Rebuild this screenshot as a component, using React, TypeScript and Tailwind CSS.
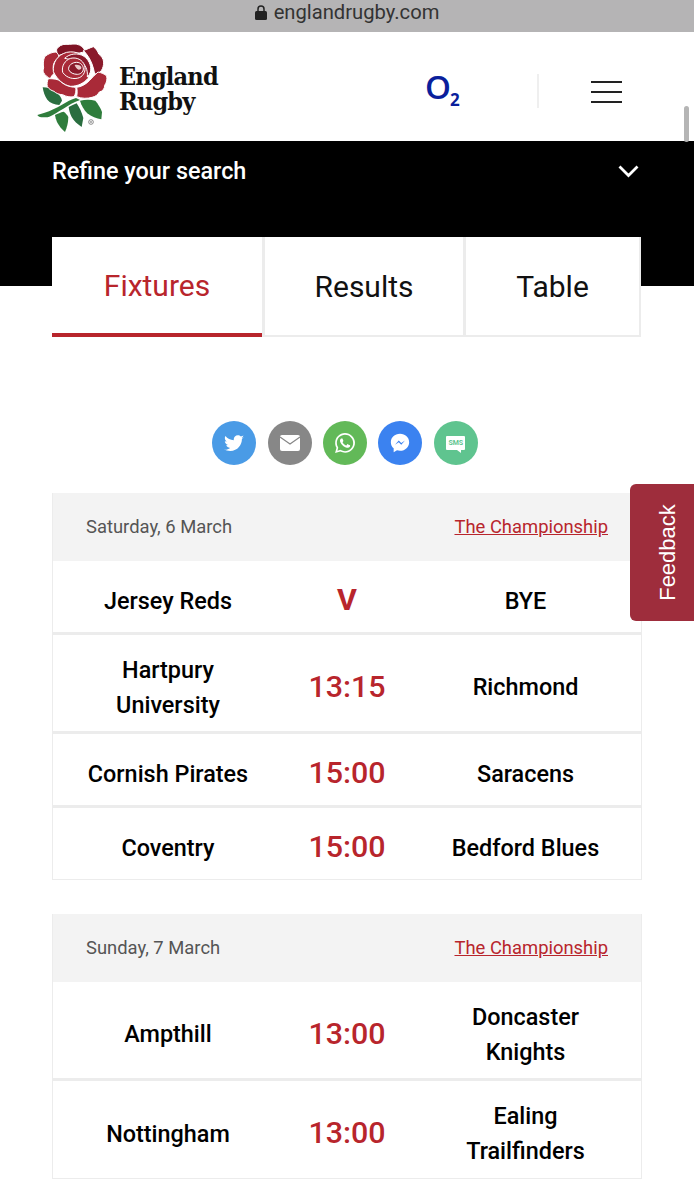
const font = "font-['Roboto',sans-serif]";

type Fixture = { home: string[]; time: string; away: string[]; h: string; big?: boolean };

const saturday: Fixture[] = [
  { home: ['Jersey Reds'], time: 'V', away: ['BYE'], h: 'h-[74px]', big: true },
  { home: ['Hartpury', 'University'], time: '13:15', away: ['Richmond'], h: 'h-[99px]' },
  { home: ['Cornish Pirates'], time: '15:00', away: ['Saracens'], h: 'h-[74px]' },
  { home: ['Coventry'], time: '15:00', away: ['Bedford Blues'], h: 'h-[72px]' },
];

const sunday: Fixture[] = [
  { home: ['Ampthill'], time: '13:00', away: ['Doncaster', 'Knights'], h: 'h-[99px]' },
  { home: ['Nottingham'], time: '13:00', away: ['Ealing', 'Trailfinders'], h: 'h-[98px]' },
];

// drawn in the coordinates of a 3x crop, hence the viewBox
function Rose() {
  const line = { stroke: '#fff', strokeWidth: 3, strokeLinejoin: 'round' as const };
  return (
    <svg width="85" height="100" viewBox="0 0 255 300" className="mt-[-3px] shrink-0">
      <path d="M22 240l22-7c18-6 34-14 52-24 14-8 28-16 42-20l12 6c-18 6-34 16-50 26-14 8-28 18-42 24-6 2-16 2-24 2-6 0-10-4-12-7z" fill="#2f7d3c" />
      <path d="M38 157c14 0 28 3 40 14 10 8 17 18 18 26l-8 13c-14-2-28-6-36-16-8-10-12-24-14-37z" fill="#2a6e40" />
      <path d="M150 197c16-4 32-4 46 0 8 10 16 22 20 34l-2 22c-14-2-30-8-42-18-10-10-18-24-22-38z" fill="#2f7d3c" />
      <path d="M116 216c8-4 16-8 24-11 8 12 16 28 20 44l-5 27c-12-8-24-18-30-30-5-10-8-20-9-30z" fill="#2a6e40" />
      <path d="M75 240c8-4 17-8 26-10 6 4 11 10 14 16 0 16-4 32-10 45-10-8-18-18-24-30-3-7-5-14-6-21z" fill="#2f7d3c" />
      <path d="M80 42c6-8 16-15 28-14 14 1 28-4 40 2 8 4 14 10 17 17-8 8-22 8-36 7-16 0-30 2-44 8-4-6-6-14-5-20z" fill="#7f1425" {...line} />
      <path d="M160 46c10-2 20-8 30-11 8 6 14 14 16 22 8 6 14 14 15 24 0 10-2 18-7 26-6 6-12 10-20 10-2-10-4-20-8-30-6-16-14-28-26-41z" fill="#8a1a2b" {...line} />
      <path d="M44 65c10-8 22-14 34-14 6 4 9 10 8 16-8 6-14 14-16 24-1 8 0 16 3 24-6 4-10 10-12 16-8-4-16-10-20-18-2-4-2-10 0-14-2-12-1-24 3-34z" fill="#a92a38" {...line} />
      <path d="M55 131c4 0 20 0 30 4 8 4 14 12 24 16 10 4 20 6 28 6 2 10 0 20-5 28-12 2-24 0-34-6-10 0-20-4-26-10-8-2-16-8-20-14-2-8 0-18 3-24z" fill="#a92a38" {...line} />
      <path d="M140 157c14-2 26-8 38-20 8-8 16-18 26-26 10 2 20 6 26 12 2 10 0 20-6 28 0 10-6 18-16 20-4 8-12 14-22 16-14 4-30 4-46-2 2-10 2-20 0-28z" fill="#a92a38" {...line} />
      <path d="M70 110c-2-28 12-50 40-58 30-6 54 8 68 34 4 16 2 30-4 44-12 14-30 24-52 24-22-4-40-20-52-44z" fill="#a92a38" {...line} />
      <path d="M104 70c14-14 40-18 58-6 14 10 22 26 20 44-2 8-6 14-10 18 2-22-6-40-24-48-16-6-32-4-44-8z" fill="#8a1a2b" {...line} />
      <path d="M98 112c-4-18 6-36 24-42 18-4 36 4 42 22 4 14-2 30-16 36-16 6-38 2-50-16z" fill="#a92a38" {...line} />
      <path d="M116 104c-2-12 10-22 24-22 12 0 20 10 20 20 0 8-8 16-18 16-10 0-22-4-26-14z" fill="#8a1a2b" {...line} />
      <path d="M134 90c8-2 16 0 20 6 1 6-2 8-8 8-6-2-10-8-12-14z" fill="#eac9c9" />
      <circle cx="183" cy="261" r="7" fill="none" stroke="#555" strokeWidth="2" />
      <circle cx="183" cy="261" r="2.500" fill="#555" />
    </svg>
  );
}

function ShareRow() {
  return (
    <div className="mt-[84px] flex justify-center gap-[11.400px] pr-[4px]">
      <span className="flex h-11 w-11 items-center justify-center rounded-full bg-[#4a9be6]">
        <svg width="20" height="17" viewBox="0 0 24 20" fill="#fff">
          <path d="M24 2.400c-.9.4-1.800.7-2.800.8 1-.6 1.800-1.600 2.200-2.700-1 .6-2 1-3.100 1.200C19.300.6 18 0 16.600 0c-2.700 0-4.900 2.200-4.900 4.900 0 .4 0 .8.100 1.100C7.700 5.800 4.100 3.800 1.700.9c-.4.700-.7 1.600-.7 2.500 0 1.700.9 3.200 2.200 4.100-.8 0-1.600-.2-2.200-.6v.1c0 2.400 1.700 4.400 3.900 4.800-.7.200-1.500.2-2.200.1.600 2 2.400 3.400 4.600 3.400-1.700 1.300-3.800 2.100-6.100 2.100-.4 0-.8 0-1.200-.1C2.200 18.200 4.800 19 7.500 19c9.100 0 14-7.500 14-14v-.6c1-.7 1.800-1.600 2.500-2z" />
        </svg>
      </span>
      <span className="flex h-11 w-11 items-center justify-center rounded-full bg-[#878787]">
        <svg width="20" height="16" viewBox="0 0 20 16">
          <rect width="20" height="16" rx="2" fill="#fff" />
          <path d="M0 2l10 7 10-7" fill="none" stroke="#878787" strokeWidth="1.200" />
        </svg>
      </span>
      <span className="flex h-11 w-11 items-center justify-center rounded-full bg-[#62b958]">
        <svg width="20" height="20" viewBox="0 0 24 24" fill="#fff">
          <path d="M17.500 14.400c-.3-.1-1.800-.9-2-1-.3-.1-.5-.1-.7.200-.2.300-.8 1-.9 1.200-.2.200-.3.200-.6.100-.3-.2-1.300-.5-2.400-1.500-.9-.8-1.500-1.800-1.700-2.100-.2-.3 0-.5.100-.6l.4-.5c.2-.2.200-.3.300-.5.100-.2.100-.4 0-.5-.1-.2-.7-1.600-.9-2.200-.2-.6-.5-.5-.7-.5h-.6c-.2 0-.5.100-.8.400-.3.300-1 1-1 2.500s1.100 2.900 1.200 3.100c.1.200 2.100 3.200 5.100 4.500.7.300 1.300.5 1.700.6.700.2 1.400.2 1.900.1.600-.1 1.800-.7 2-1.400.3-.7.300-1.300.2-1.400-.1-.1-.3-.2-.6-.4zM12 21.800c-1.800 0-3.500-.5-5-1.400l-.4-.2-3.700 1 1-3.600-.2-.4c-1-1.600-1.500-3.400-1.500-5.200C2.200 6.500 6.600 2.200 12 2.200c2.600 0 5.100 1 6.900 2.900 1.900 1.800 2.900 4.300 2.900 6.900 0 5.400-4.400 9.800-9.800 9.800zM20.400 3.500C18.200 1.300 15.200 0 12 0 5.500 0 .2 5.300.2 11.900c0 2.100.5 4.100 1.600 5.900L.1 24l6.300-1.700c1.700.9 3.700 1.400 5.700 1.400 6.500 0 11.900-5.300 11.900-11.900 0-3.100-1.300-6.100-3.600-8.300z" />
        </svg>
      </span>
      <span className="flex h-11 w-11 items-center justify-center rounded-full bg-[#3b82f0]">
        <svg width="20" height="20" viewBox="0 0 24 24">
          <path d="M12 1C5.600 1 1 5.400 1 11c0 3 1.300 5.600 3.400 7.400V23l4-2.200c1.100.3 2.300.5 3.600.5 6.400 0 11-4.700 11-10.300S18.400 1 12 1z" fill="#fff" />
          <path d="M6 14l4.500-5 3 3 4.500-3-4.500 5-3-3z" fill="#3b82f0" />
        </svg>
      </span>
      <span className="flex h-11 w-11 items-center justify-center rounded-full bg-[#5fc48f]">
        <span className="relative flex h-[14px] w-[19px] items-center justify-center rounded-[1px] bg-white text-[7px] font-bold text-[#5fc48f]">
          SMS
          <span className="absolute -bottom-[3px] right-[4px] h-0 w-0 border-l-[4px] border-t-[3px] border-l-transparent border-t-white" />
        </span>
      </span>
    </div>
  );
}

function Row({ f }: { f: Fixture }) {
  return (
    <div className={`flex items-center border-b-[3px] border-[#ececec] pt-[9px] text-center last:border-b ${f.h}`}>
      <div className="w-[230px] text-[23.400px] leading-[35px] font-medium text-black">
        {f.home.map((t) => <div key={t}>{t}</div>)}
      </div>
      <div className={`mb-[2px] w-[128px] text-[30.400px] text-[#b8252c] ${f.big ? 'font-bold' : 'font-medium'}`}>{f.time}</div>
      <div className="w-[229px] text-[23.400px] leading-[35px] font-medium text-black">
        {f.away.map((t) => <div key={t}>{t}</div>)}
      </div>
    </div>
  );
}

function DayCard({ date, fixtures }: { date: string; fixtures: Fixture[] }) {
  return (
    <div className="border-x border-[#ececec]">
      <div className="flex h-[68px] items-center justify-between bg-[#f3f3f3] pr-[33px] pl-[33px] text-[18.400px]">
        <span className="text-[#555]">{date}</span>
        <a className="text-[#b8252c] underline">The Championship</a>
      </div>
      {fixtures.map((f) => <Row key={f.home[0]} f={f} />)}
    </div>
  );
}

export default function App() {
  return (
    <div className={`relative h-[1200px] overflow-hidden bg-white ${font}`}>
      <div className="flex h-8 items-center justify-center gap-[7px] bg-[#b5b4b5] pb-[8px] text-[20.200px] text-[#333]">
        <svg width="12" height="15" viewBox="0 0 12 15" fill="#222">
          <rect y="6" width="12" height="9" rx="1.500" />
          <path d="M3 7V4a3 3 0 016 0v3" fill="none" stroke="#222" strokeWidth="1.500" />
        </svg>
        englandrugby.com
      </div>

      <header className="flex h-[109px] items-center bg-white">
        <div className="ml-[30px] flex w-[340px] items-center">
          <Rose />
          <div className="mt-[4px] ml-[4px] font-['DejaVu_Serif_Condensed','DejaVu_Serif',serif] text-[25px] leading-[29px] font-bold tracking-[-0.800px] text-[#111]">
            <div className="-mb-[4px]">England</div>
            <div>Rugby</div>
          </div>
        </div>
        <div className="ml-[55px] flex w-[34px] items-end font-['Open_Sans',sans-serif] font-semibold text-[#0a1f9c]">
          <span className="text-[33px] leading-none">O</span>
          <span className="mb-[-5px] ml-[-1px] text-[17px] leading-none font-bold">2</span>
        </div>
        <div className="mt-[8px] ml-[78px] h-[34px] w-[2px] bg-[#efefef]" />
        <div className="mt-[11px] ml-[52px] flex w-[31px] flex-col gap-[7.500px]">
          <span className="h-[2.500px] bg-[#222]" />
          <span className="h-[2.500px] bg-[#222]" />
          <span className="h-[2.500px] bg-[#222]" />
        </div>
      </header>

      <div className="absolute top-[106px] right-[5px] h-[36px] w-[5px] rounded-full bg-[#b5b5b5]" />

      <div className="h-[145px] bg-black px-[52px] pt-[15px]">
        <div className="flex items-center justify-between pr-[3px] text-[23.400px] leading-[30px] font-medium text-white">
          Refine your search
          <svg width="21" height="13" viewBox="0 0 21 13" fill="none" stroke="#fff" strokeWidth="2.800">
            <path d="M1.500 1.500l9 9 9-9" />
          </svg>
        </div>
      </div>

      <div className="mx-[52px] -mt-[49px] flex h-[100px] text-[30px]">
        <div className="flex w-[210px] items-center justify-center border-b-[4px] border-[#b8252c] bg-white text-[#b8252c]">Fixtures</div>
        <div className="flex w-[204px] items-center justify-center border-x-[3px] border-b-2 border-[#ececec] bg-white text-[#111]">Results</div>
        <div className="flex w-[175px] items-center justify-center border-r-2 border-b-2 border-[#ececec] bg-white text-[#111]">Table</div>
      </div>

      <ShareRow />

      <div className="mx-[52px] mt-[28px] flex flex-col gap-[34px]">
        <DayCard date="Saturday, 6 March" fixtures={saturday} />
        <DayCard date="Sunday, 7 March" fixtures={sunday} />
      </div>

      <div className="absolute top-[484px] right-0 flex h-[137px] w-[64px] items-center justify-center rounded-l-[6px] bg-[#9e2d3c] pl-[10px] font-['Liberation_Sans',sans-serif] text-[22px] text-white">
        <span className="-rotate-90 whitespace-nowrap">Feedback</span>
      </div>
    </div>
  );
}
